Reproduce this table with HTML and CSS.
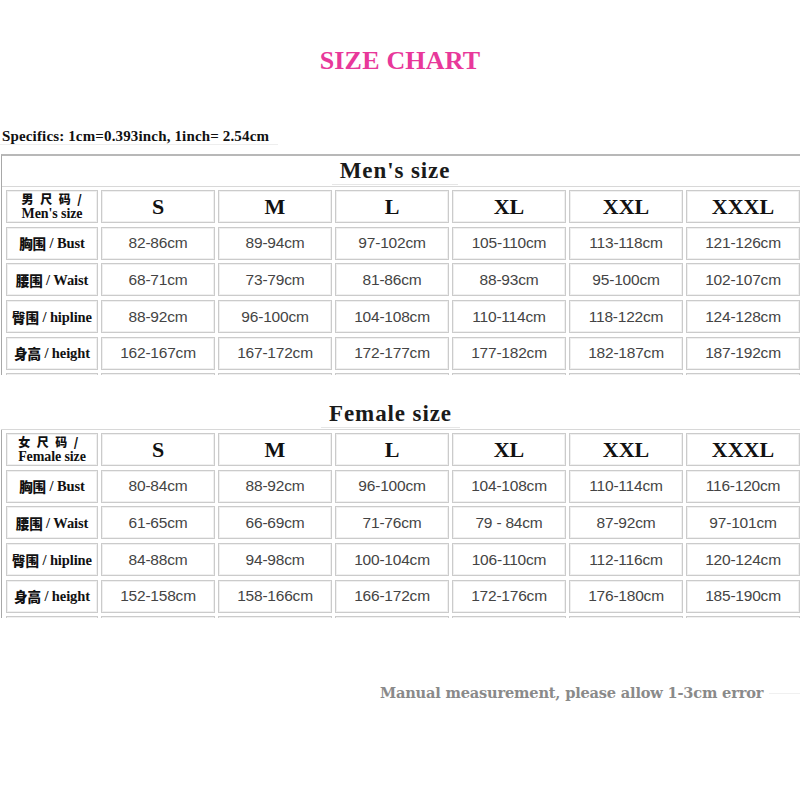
FILE: index.html
```html
<!DOCTYPE html>
<html>
<head>
<meta charset="utf-8">
<link rel="stylesheet" href="styles.css">
</head>
<body>
<div class="page">
  <h1 class="title">SIZE CHART</h1>
  <p class="specifics">Specifics: 1cm=0.393inch, 1inch= 2.54cm</p>

  <section class="chart chart-men">
    <div class="chart-head"><span class="chart-name">Men's size</span></div>
    <div class="grid-clip">
      <div class="grid">
        <div class="cell label head-label"><div class="head-text"><div class="head-zh">男 尺 码 /</div><div class="head-en">Men's size</div></div></div>
        <div class="cell size">S</div>
        <div class="cell size">M</div>
        <div class="cell size">L</div>
        <div class="cell size">XL</div>
        <div class="cell size">XXL</div>
        <div class="cell size">XXXL</div>

        <div class="cell label"><span class="zh">胸围</span>&nbsp;/ Bust</div>
        <div class="cell val">82-86cm</div>
        <div class="cell val">89-94cm</div>
        <div class="cell val">97-102cm</div>
        <div class="cell val">105-110cm</div>
        <div class="cell val">113-118cm</div>
        <div class="cell val">121-126cm</div>

        <div class="cell label"><span class="zh">腰围</span>&nbsp;/ Waist</div>
        <div class="cell val">68-71cm</div>
        <div class="cell val">73-79cm</div>
        <div class="cell val">81-86cm</div>
        <div class="cell val">88-93cm</div>
        <div class="cell val">95-100cm</div>
        <div class="cell val">102-107cm</div>

        <div class="cell label"><span class="zh">臀围</span>&nbsp;/ hipline</div>
        <div class="cell val">88-92cm</div>
        <div class="cell val">96-100cm</div>
        <div class="cell val">104-108cm</div>
        <div class="cell val">110-114cm</div>
        <div class="cell val">118-122cm</div>
        <div class="cell val">124-128cm</div>

        <div class="cell label"><span class="zh">身高</span>&nbsp;/ height</div>
        <div class="cell val">162-167cm</div>
        <div class="cell val">167-172cm</div>
        <div class="cell val">172-177cm</div>
        <div class="cell val">177-182cm</div>
        <div class="cell val">182-187cm</div>
        <div class="cell val">187-192cm</div>

        <div class="cell label"></div>
        <div class="cell val"></div>
        <div class="cell val"></div>
        <div class="cell val"></div>
        <div class="cell val"></div>
        <div class="cell val"></div>
        <div class="cell val"></div>
      </div>
    </div>
  </section>

  <section class="chart chart-female">
    <div class="chart-head"><span class="chart-name">Female size</span></div>
    <div class="grid-clip">
      <div class="grid">
        <div class="cell label head-label"><div class="head-text"><div class="head-zh">女 尺 码 /</div><div class="head-en">Female size</div></div></div>
        <div class="cell size">S</div>
        <div class="cell size">M</div>
        <div class="cell size">L</div>
        <div class="cell size">XL</div>
        <div class="cell size">XXL</div>
        <div class="cell size">XXXL</div>

        <div class="cell label"><span class="zh">胸围</span>&nbsp;/ Bust</div>
        <div class="cell val">80-84cm</div>
        <div class="cell val">88-92cm</div>
        <div class="cell val">96-100cm</div>
        <div class="cell val">104-108cm</div>
        <div class="cell val">110-114cm</div>
        <div class="cell val">116-120cm</div>

        <div class="cell label"><span class="zh">腰围</span>&nbsp;/ Waist</div>
        <div class="cell val">61-65cm</div>
        <div class="cell val">66-69cm</div>
        <div class="cell val">71-76cm</div>
        <div class="cell val">79 - 84cm</div>
        <div class="cell val">87-92cm</div>
        <div class="cell val">97-101cm</div>

        <div class="cell label"><span class="zh">臀围</span>&nbsp;/ hipline</div>
        <div class="cell val">84-88cm</div>
        <div class="cell val">94-98cm</div>
        <div class="cell val">100-104cm</div>
        <div class="cell val">106-110cm</div>
        <div class="cell val">112-116cm</div>
        <div class="cell val">120-124cm</div>

        <div class="cell label"><span class="zh">身高</span>&nbsp;/ height</div>
        <div class="cell val">152-158cm</div>
        <div class="cell val">158-166cm</div>
        <div class="cell val">166-172cm</div>
        <div class="cell val">172-176cm</div>
        <div class="cell val">176-180cm</div>
        <div class="cell val">185-190cm</div>

        <div class="cell label"></div>
        <div class="cell val"></div>
        <div class="cell val"></div>
        <div class="cell val"></div>
        <div class="cell val"></div>
        <div class="cell val"></div>
        <div class="cell val"></div>
      </div>
    </div>
  </section>

  <div class="note"><span class="note-text">Manual measurement, please allow 1-3cm error</span><span class="note-line"></span></div>
</div>
</body>
</html>
```

FILE: styles.css
```css
html, body {
  margin: 0;
  padding: 0;
  background: #ffffff;
}

.page {
  width: 800px;
  height: 800px;
  overflow: hidden;
  font-family: "Liberation Serif", "Noto Sans CJK SC", serif;
  color: #111;
}

.title {
  margin: 46px 0 0 0;
  height: 30px;
  line-height: 30px;
  text-align: center;
  font-size: 26px;
  font-weight: bold;
  color: #e8389a;
  letter-spacing: 0.2px;
}

.specifics {
  margin: 52px 0 0 0;
  width: 276px;
  padding-left: 2px;
  height: 16px;
  line-height: 16px;
  font-size: 15px;
  font-weight: bold;
  color: #111;
  letter-spacing: 0.15px;
  white-space: nowrap;
  border-bottom: 1px solid #eeeeee;
  box-sizing: content-box;
}

.chart {
  margin-left: 1px;
}

.chart-men {
  margin-top: 9px;
  border-top: 2px solid #b8b8b8;
  border-left: 1px solid #a8a8a8;
}

.chart-female {
  margin-top: 24px;
}

.chart-head {
  height: 30px;
  line-height: 30px;
  text-align: center;
  padding-right: 12px;
  font-size: 23px;
  font-weight: bold;
  color: #1a1a1a;
  letter-spacing: 0.9px;
  border-bottom: 1px solid #d8d8d8;
}

.chart-female .chart-head {
  padding-right: 20px;
}

.chart-female .grid-clip {
  border-left: 1px solid #a8a8a8;
}

.chart-name {
  display: inline-block;
  line-height: 26px;
  border-bottom: 1px solid #e6e6e6;
  padding: 0 8px;
}

.grid-clip {
  height: 188px;
  overflow: hidden;
}

.grid {
  display: grid;
  grid-template-columns: 92px repeat(6, 114px);
  grid-auto-rows: 33px;
  column-gap: 3px;
  row-gap: 3.7px;
  padding: 3px 0 0 4px;
}

.cell {
  border: 1px solid #cbcbcb;
  box-shadow: inset 0 0 0 1px #f0f0f0;
  display: flex;
  align-items: center;
  justify-content: center;
  text-align: center;
  box-sizing: border-box;
}

.label {
  font-family: "Liberation Serif", "Noto Sans CJK SC", serif;
  font-size: 14.5px;
  font-weight: bold;
  color: #111;
  white-space: nowrap;
  letter-spacing: -0.1px;
  line-height: 16px;
}

.zh {
  font-family: "Noto Sans CJK SC", sans-serif;
  font-size: 13.5px;
  font-weight: 900;
  line-height: 14px;
  vertical-align: 1px;
}

.head-label {
  padding-top: 0;
}

.head-text {
  text-align: left;
}

.head-zh {
  font-family: "Noto Sans CJK SC", sans-serif;
  font-size: 12px;
  font-weight: 900;
  line-height: 15px;
  height: 15px;
  word-spacing: 4px;
}

.head-en {
  font-size: 14px;
  line-height: 16px;
  height: 16px;
}

.size {
  font-size: 22px;
  font-weight: bold;
  color: #111;
}

.val {
  font-family: "Liberation Sans", Arial, sans-serif;
  font-size: 15.5px;
  color: #444;
  letter-spacing: -0.2px;
}

.note {
  margin: 65px 0 0 0;
  padding-left: 380px;
  height: 20px;
  line-height: 20px;
  display: flex;
  align-items: center;
}

.note-text {
  font-family: "DejaVu Serif", serif;
  font-size: 14.6px;
  font-weight: bold;
  color: #8a8a8a;
  letter-spacing: -0.2px;
  white-space: nowrap;
}

.note-line {
  flex: 1;
  height: 1px;
  margin-left: 6px;
  background: #f0f0f0;
}
```
